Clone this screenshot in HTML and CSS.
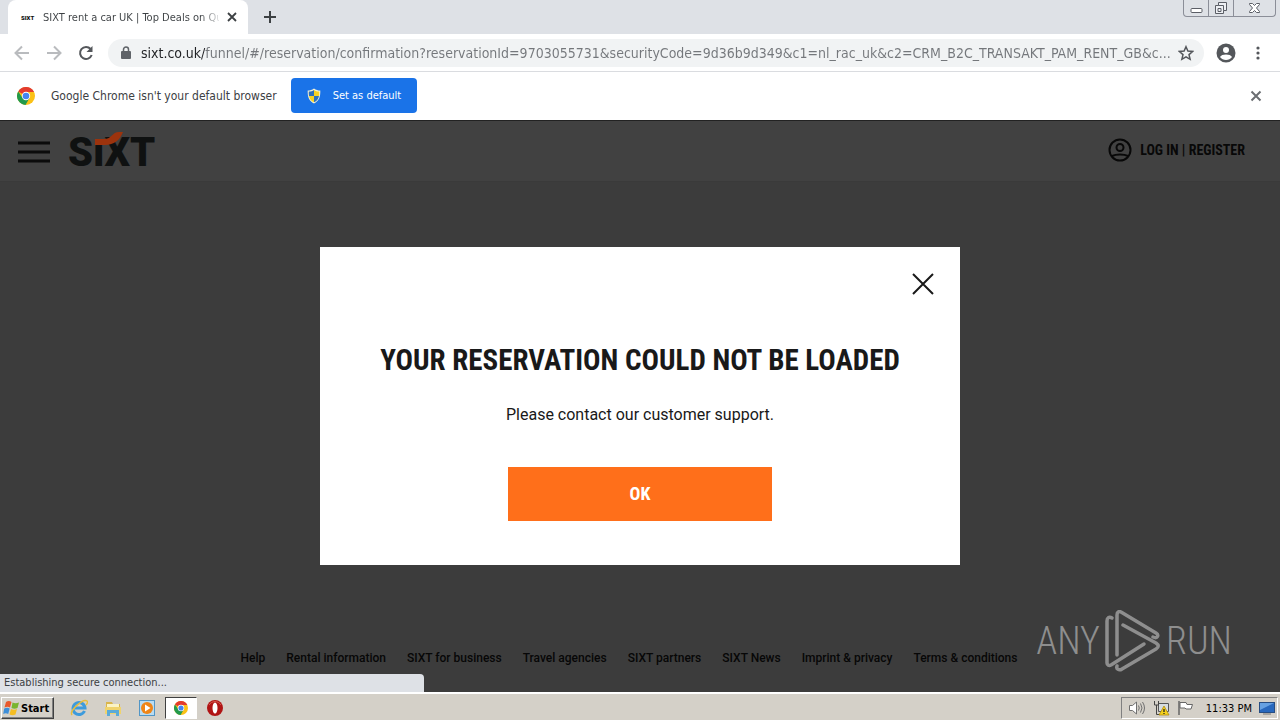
FILE: index.html
```html
<!DOCTYPE html>
<html lang="en">
<head>
    <meta charset="UTF-8">
    <meta name="viewport" content="width=device-width, initial-scale=1.0">
    <title>SIXT rent a car UK | Top Deals on Quality Cars</title>
    <link rel="stylesheet" href="styles.css">
</head>
<body>
    <!-- Tab strip -->
    <div class="tab-strip">
        <div class="tab">
            <span class="favicon">SIXT</span>
            <span class="tab-title">SIXT rent a car UK | Top Deals on Qu</span>
            <button class="icon-button" aria-label="Close tab">
                <svg width="10" height="10" viewBox="0 0 10 10"><path d="M1 1l8 8M9 1l-8 8" stroke="#3c4043" stroke-width="1.8"/></svg>
            </button>
        </div>
        <button class="icon-button new-tab" aria-label="New tab">
            <svg width="12" height="12" viewBox="0 0 12 12"><path d="M6 0v12M0 6h12" stroke="#3c4043" stroke-width="2"/></svg>
        </button>
        <div class="window-controls">
            <button aria-label="Minimize"><svg width="13" height="16" viewBox="0 0 13 16"><rect x="1" y="8.500" width="11" height="4" rx="1" fill="#fff" stroke="#5b5e66"/></svg></button>
            <button aria-label="Restore"><svg width="14" height="16" viewBox="0 0 14 16"><path d="M4.500 2.500h8v8h-3v3h-8v-8h3z" fill="#eef0f4" stroke="#5b5e66"/><path d="M4.500 5.500h5v5M4 8.500h3v3H4z" fill="none" stroke="#5b5e66"/></svg></button>
            <button class="wide" aria-label="Close"><svg width="13" height="16" viewBox="0 0 13 16"><path d="M1.500 3.500h3l2 2 2-2h3v1L8.500 8l3 3.500v1h-3l-2-2-2 2h-3v-1L4.500 8l-3-3.500z" fill="#fff" stroke="#5b5e66"/></svg></button>
        </div>
    </div>

    <!-- Toolbar -->
    <div class="toolbar">
        <button class="icon-button" aria-label="Back">
            <svg width="16" height="16" viewBox="0 0 16 16" fill="none" stroke="#b9bbbe" stroke-width="2"><path d="M15 8H2M8 1.500L1.500 8 8 14.500"/></svg>
        </button>
        <button class="icon-button" aria-label="Forward">
            <svg width="16" height="16" viewBox="0 0 16 16" fill="none" stroke="#b9bbbe" stroke-width="2"><path d="M1 8h13M8 1.500L14.500 8 8 14.500"/></svg>
        </button>
        <button class="icon-button" aria-label="Reload">
            <svg width="16" height="16" viewBox="0 0 16 16"><path d="M12.600 4A6 6 0 1 0 13.700 10" fill="none" stroke="#54575b" stroke-width="2"/><path d="M14.500 1v6H8.500z" fill="#54575b"/></svg>
        </button>
        <div class="address-bar">
            <svg width="12" height="14" viewBox="0 0 12 14"><rect x="1" y="5" width="10" height="8" rx="1" fill="#5f6368"/><path d="M3.500 6V3.500a2.500 2.500 0 0 1 5 0V6" fill="none" stroke="#5f6368" stroke-width="1.500"/></svg>
            <input class="url" type="text" aria-label="Address" value="sixt.co.uk/funnel/#/reservation/confirmation?reservationId=9703055731&amp;securityCode=9d36b9d349&amp;c1=nl_rac_uk&amp;c2=CRM_B2C_TRANSAKT_PAM_RENT_GB&amp;c...">
            <button class="icon-button" aria-label="Bookmark this page">
                <svg width="16" height="16" viewBox="0 0 16 16"><path d="M8 1.700l1.900 4.400 4.700.4-3.600 3.100 1.100 4.700L8 11.800l-4.100 2.500L5 9.600 1.400 6.500l4.700-.4z" fill="none" stroke="#54575b" stroke-width="1.500"/></svg>
            </button>
        </div>
        <button class="icon-button profile" aria-label="Profile">
            <svg width="20" height="20" viewBox="0 0 20 20"><circle cx="10" cy="10" r="9.500" fill="#54575b"/><circle cx="10" cy="7" r="3" fill="#fff"/><path d="M4 14c1.500-3.300 10.500-3.300 12 0-2.700 4-9.300 4-12 0z" fill="#fff"/></svg>
        </button>
        <button class="icon-button" aria-label="Menu">
            <svg width="16" height="16" viewBox="0 0 16 16" fill="#54575b"><circle cx="8" cy="3" r="1.600"/><circle cx="8" cy="8" r="1.600"/><circle cx="8" cy="13" r="1.600"/></svg>
        </button>
    </div>

    <!-- Default browser bar -->
    <div class="info-bar">
        <svg class="chrome-icon" width="18" height="18" viewBox="0 0 18 18"><circle cx="9" cy="9" r="9" fill="#fbc116"/><path d="M9 9L1.200 4.500A9 9 0 0 1 16.800 4.500L17 5H9z" fill="#e33b2e"/><path d="M1.200 4.500A9 9 0 0 0 8.500 18l4-7L9 9 5 10z" fill="#229a4c"/><circle cx="9" cy="9" r="4.200" fill="#fff"/><circle cx="9" cy="9" r="3.300" fill="#4385f0"/></svg>
        <span>Google Chrome isn't your default browser</span>
        <button class="default-button">
            <svg width="14" height="16" viewBox="0 0 14 16"><path d="M7 .5C5 2 3 2.500.7 2.500.5 9 2 13 7 15.500 12 13 13.500 9 13.300 2.500 11 2.500 9 2 7 .5z" fill="#f5f1d5"/><path d="M7 2v6H2C1.700 6.500 1.700 5 1.800 3.600 4 3.500 5.500 3 7 2zM7 8h5c-.6 3-2 5-5 6.300z" fill="#2d71bd"/><path d="M7 2v6h5c.3-1.500.3-3 .2-4.400C10 3.500 8.500 3 7 2zM7 8H2c.6 3 2 5 5 6.300z" fill="#f7d323"/></svg>
            Set as default
        </button>
        <button class="icon-button info-close" aria-label="Dismiss">
            <svg width="12" height="12" viewBox="0 0 12 12"><path d="M1.500 1.500l9 9M10.500 1.500l-9 9" stroke="#6b6e72" stroke-width="2"/></svg>
        </button>
    </div>

    <!-- Web page -->
    <div class="page">
        <header class="site-header">
            <button class="icon-button" aria-label="Open navigation">
                <svg width="32" height="22" viewBox="0 0 32 22"><path d="M0 2h32M0 11h32M0 20h32" stroke="#0b0b0b" stroke-width="3"/></svg>
            </button>
            <a class="logo" href="#" aria-label="SIXT">
                <svg width="90" height="44" viewBox="0 0 90 44"><text class="logo-text" x="0" y="36">SıXT</text><path d="M27 9h9c8 0 8-7 15-7h4c-3 8-9 13-18 13H27z" fill="#9c330d"/></svg>
            </a>
            <a class="login" href="#">
                <svg width="24" height="24" viewBox="0 0 24 24" fill="none" stroke="#080808" stroke-width="2"><circle cx="12" cy="12" r="10.500"/><circle cx="12" cy="9.500" r="3.500"/><path d="M4 18c4-2 12-2 16 0"/></svg>
                LOG IN | REGISTER
            </a>
        </header>

        <main class="content">
            <div class="dialog" role="dialog" aria-labelledby="dialog-title">
                <button class="icon-button dialog-close" aria-label="Close">
                    <svg width="22" height="22" viewBox="0 0 22 22"><path d="M1 1l20 20M21 1L1 21" stroke="#191919" stroke-width="2"/></svg>
                </button>
                <h1 id="dialog-title">YOUR RESERVATION COULD NOT BE LOADED</h1>
                <p>Please contact our customer support.</p>
                <button class="ok-button">OK</button>
            </div>
        </main>

        <footer class="site-footer">
            <a href="#">Help</a>
            <a href="#">Rental information</a>
            <a href="#">SIXT for business</a>
            <a href="#">Travel agencies</a>
            <a href="#">SIXT partners</a>
            <a href="#">SIXT News</a>
            <a href="#">Imprint &amp; privacy</a>
            <a href="#">Terms &amp; conditions</a>
        </footer>

        <div class="status-bubble">Establishing secure connection...</div>

        <div class="watermark">
            <span>ANY</span>
            <svg width="56" height="62" viewBox="0 0 56 62" fill="none" stroke="#8e8e8e" stroke-width="3.500" stroke-linejoin="round" stroke-linecap="round"><path d="M7 8C4 6 2 8 2 11v42c0 2 2 3 4 2l33-21"/><path d="M12 45V5c0-3 2-4 4-3l35 21c3 2 2 6-3 4"/><path d="M18 15l33 18c3 2 3 4 0 6L17 59c-3 2-6 0-5-3"/></svg>
            <span>RUN</span>
        </div>
    </div>

    <!-- Windows taskbar -->
    <div class="taskbar">
        <button class="start-button">
            <svg width="17" height="16" viewBox="0 0 17 16"><path d="M3 2c2-1.500 4-1 5.500 0L7 7.500C5.500 6.500 3.500 6.500 1.500 7.500z" fill="#e8582b"/><path d="M9.500 2.500c2 1 4 1 6.500 0L14.500 8c-2 1-4 1-6 0z" fill="#79b52f"/><path d="M1.200 8.500c2-1 4-1 5.500 0L5.200 14c-1.500-1-3.500-1-5 0z" fill="#3d8ed8"/><path d="M8 9c2 1 4 1 6 0l-1.500 5.500c-2 1-4 1-6 0z" fill="#f5bd22"/></svg>
            Start
        </button>
        <button class="task" aria-label="Internet Explorer">
            <svg width="18" height="18" viewBox="0 0 18 18" fill="none"><path d="M14.500 12A6 6 0 1 1 15 9H5" stroke="#3d9bdc" stroke-width="3"/><path d="M2 16C-1 12 13-1 17 2c1 1 0 3-1 4" stroke="#e6bd3d" stroke-width="1.500"/></svg>
        </button>
        <button class="task" aria-label="Explorer">
            <svg width="18" height="18" viewBox="0 0 18 18"><path d="M2 3h6l1 2h7v10H2z" fill="#d9b54c"/><path d="M3 5h12v5H3z" fill="#fbf3c4"/><path d="M1 8h16v7H1z" fill="#f0d36c"/><path d="M3 17v-6h12v6h-3v-3H6v3z" fill="#5aaad8"/></svg>
        </button>
        <button class="task" aria-label="Media Player">
            <svg width="18" height="18" viewBox="0 0 18 18"><rect x="1.500" y="1.500" width="15" height="15" fill="#b9dcf2" stroke="#5296c6"/><circle cx="9" cy="9" r="6" fill="#ef8517"/><path d="M7 5.500v7L12.500 9z" fill="#fff"/></svg>
        </button>
        <button class="task active" aria-label="Google Chrome">
            <svg width="14" height="14" viewBox="0 0 18 18"><circle cx="9" cy="9" r="9" fill="#fbc116"/><path d="M9 9L1.200 4.500A9 9 0 0 1 16.800 4.500L17 5H9z" fill="#e33b2e"/><path d="M1.200 4.500A9 9 0 0 0 8.500 18l4-7L9 9 5 10z" fill="#229a4c"/><circle cx="9" cy="9" r="4.200" fill="#fff"/><circle cx="9" cy="9" r="3.300" fill="#4385f0"/></svg>
        </button>
        <button class="task" aria-label="Opera">
            <svg width="18" height="18" viewBox="0 0 18 18"><circle cx="9" cy="9" r="8" fill="#b01414"/><ellipse cx="9" cy="9" rx="2.500" ry="5.500" fill="#fff"/><path d="M3 6a7 7 0 0 1 12 0" fill="none" stroke="#db5a50"/></svg>
        </button>
        <div class="tray">
            <svg width="18" height="16" viewBox="0 0 18 16" fill="none" stroke="#707070"><path d="M1.500 5.500h3L8.500 2v12l-4-3.500h-3z" fill="#fff"/><path d="M10.500 5.500q1.500 2.500 0 5M12.500 3.500q3 4.500 0 9M14.500 2q4 6 0 12"/></svg>
            <svg width="17" height="16" viewBox="0 0 17 16"><path d="M5.500 3.500h10v8h-10z" fill="#d6dce0" stroke="#555"/><path d="M1.500 1v4h4V1M3.500 5v9.500h4" fill="none" stroke="#444"/><path d="M11 6l5 9H6z" fill="#f6d21c" stroke="#b18c10" stroke-width=".8"/><path d="M11 9v3M11 13v1" stroke="#222" stroke-width="1.300"/></svg>
            <svg width="17" height="16" viewBox="0 0 17 16"><path d="M2 1v14" stroke="#666" stroke-width="1.500"/><path d="M3 2.500h6l1 2h5.500L14 9H9L8 8H3z" fill="#fff" stroke="#666"/></svg>
            <time>11:33 PM</time>
            <svg width="16" height="14" viewBox="0 0 16 14"><rect x=".5" y="1.500" width="15" height="10" fill="#2868bd" stroke="#264d83"/><path d="M1 2h14L1 9z" fill="#66a1e2"/><path d="M4 13h8" stroke="#777"/></svg>
        </div>
    </div>
</body>
</html>
```
FILE: styles.css
```css
:root {
    --chrome-bg: #dee1e6;
    --ui-font: "DejaVu Sans Condensed", "Noto Sans", sans-serif;
    --site-font: Roboto, sans-serif;
    --condensed-font: "Roboto Condensed", Roboto, sans-serif;
}

* {
    box-sizing: border-box;
}

body {
    margin: 0;
    min-height: 100vh;
    display: flex;
    flex-direction: column;
    font-family: var(--ui-font);
    font-size: 12px;
    color: #3c4043;
}

button {
    font: inherit;
    cursor: pointer;
}

svg {
    display: block;
    flex: none;
}

a {
    color: inherit;
    text-decoration: none;
}

.icon-button {
    display: flex;
    padding: 0;
    border: none;
    background: none;
}

/* Tab strip */
.tab-strip {
    display: flex;
    height: 34px;
    padding-left: 8px;
    background: var(--chrome-bg);
}

.tab {
    display: flex;
    align-items: center;
    width: 240px;
    padding: 0 11px 0 13px;
    background: #fff;
    border-radius: 8px 8px 0 0;
    font-size: 11px;
}

.favicon {
    width: 22px;
    font: 900 6px var(--site-font);
    color: #111;
}

/* long titles fade out before the close button */
.tab-title {
    flex: 1;
    min-width: 0;
    margin-right: 8px;
    white-space: nowrap;
    color: transparent;
    background: linear-gradient(to right, #3c4043 158px, #e4e5e6 176px);
    -webkit-background-clip: text;
    background-clip: text;
}

.new-tab {
    align-self: center;
    margin-left: 16px;
}

.window-controls {
    display: flex;
    align-self: flex-start;
    height: 17px;
    margin: 0 4px 0 auto;
    border: 1px solid #8b8e98;
    border-top: none;
    border-radius: 0 0 4px 4px;
}

.window-controls button {
    display: flex;
    justify-content: center;
    width: 25px;
    padding: 0;
    border: none;
    border-right: 1px solid #8b8e98;
    background: none;
}

.window-controls .wide {
    width: 41px;
    border-right: none;
}

/* Toolbar */
.toolbar {
    display: flex;
    align-items: center;
    gap: 16px;
    height: 38px;
    padding: 0 14px;
    background: #fff;
    border-bottom: 1px solid #dadce0;
}

.address-bar {
    flex: 1;
    display: flex;
    align-items: center;
    height: 28px;
    margin-left: -2px;
    padding: 0 10px 0 12px;
    background: #f1f3f4;
    border-radius: 14px;
}

/* the host is drawn darker than the rest of the address */
.url {
    flex: 1;
    min-width: 0;
    margin-left: 9px;
    padding: 0;
    border: none;
    outline: none;
    font-family: var(--ui-font);
    font-size: 14px;
    color: transparent;
    background: linear-gradient(to right, #202124 64px, #74777b 64px);
    -webkit-background-clip: text;
    background-clip: text;
}

.profile {
    margin: 0 -2px 0 -4px;
}

/* Default browser bar */
.info-bar {
    display: flex;
    align-items: center;
    height: 48px;
    padding: 0 18px 1px 17px;
    background: #fff;
}

.chrome-icon {
    margin-right: 16px;
}

.default-button {
    display: flex;
    align-items: center;
    gap: 12px;
    height: 35px;
    margin-left: 14px;
    padding: 0 16px;
    border: none;
    border-radius: 4px;
    background: #1a73e8;
    color: #fff;
    font-size: 11px;
}

.info-close {
    margin-left: auto;
}

/* Web page */
.page {
    position: relative;
    flex: 1;
    display: flex;
    flex-direction: column;
    background: #3c3c3c;
    font-family: var(--site-font);
}

.site-header {
    display: flex;
    align-items: center;
    gap: 18px;
    height: 62px;
    padding: 1px 35px 0 18px;
    background: #414141;
    border-top: 1px solid #222;
    border-bottom: 1px solid #3a3a3a;
}

.logo-text {
    font: 900 40px var(--site-font);
    fill: #0f1111;
}

.login {
    display: flex;
    align-items: center;
    gap: 8px;
    margin-left: auto;
    padding-bottom: 3px;
    font: bold 14px var(--condensed-font);
    color: #080808;
}

.content {
    flex: 1;
    display: flex;
    align-items: center;
    justify-content: center;
    padding-bottom: 22px;
}

.dialog {
    display: flex;
    flex-direction: column;
    align-items: center;
    width: 50%;
    min-width: 560px;
    padding: 26px 26px 44px;
    background: #fff;
    color: #191919;
}

.dialog-close {
    align-self: flex-end;
}

.dialog h1 {
    margin: 48px 0 0;
    font: bold 29px/34px var(--condensed-font);
}

.dialog p {
    margin: 26px 0 40px;
    font-size: 16px;
    line-height: 24px;
}

.ok-button {
    width: 264px;
    height: 54px;
    border: none;
    background: #ff6f1a;
    color: #fff;
    font: bold 18px var(--condensed-font);
}

.site-footer {
    display: flex;
    justify-content: center;
    gap: 21px;
    height: 41px;
    padding-right: 22px;
    font-size: 12px;
    font-weight: 500;
    color: #070707;
}

.status-bubble {
    position: absolute;
    left: 0;
    bottom: 0;
    width: 424px;
    height: 18px;
    padding-left: 4px;
    background: var(--chrome-bg);
    border-radius: 0 4px 0 0;
    font: 11px/18px var(--ui-font);
    color: #3c4043;
}

.watermark {
    position: absolute;
    right: 48px;
    bottom: 20px;
    display: flex;
    align-items: center;
    gap: 5px;
    font: 300 38px var(--condensed-font);
    color: #8e8e8e;
}

/* Taskbar */
.taskbar {
    display: flex;
    align-items: center;
    height: 28px;
    padding: 2px 2px 0 1px;
    background: #d4d0c8;
    border-top: 2px solid #fff;
    color: #000;
}

.start-button {
    display: flex;
    align-items: center;
    gap: 1px;
    width: 53px;
    height: 22px;
    margin-right: 9px;
    padding: 0 1px;
    border: 1px solid;
    border-color: #fff #404040 #404040 #fff;
    background: #d4d0c8;
    box-shadow: inset -1px -1px #808080;
    font: bold 11px var(--ui-font);
}

.task {
    display: flex;
    align-items: center;
    justify-content: center;
    width: 32px;
    height: 22px;
    margin-right: 2px;
    padding: 0;
    border: none;
    background: none;
}

.task.active {
    border: 1px solid;
    border-color: #404040 #fff #fff #404040;
    background: #fff;
}

.tray {
    display: flex;
    align-items: center;
    gap: 7px;
    height: 22px;
    margin-left: auto;
    padding: 0 2px 0 6px;
    border: 1px solid;
    border-color: #808080 #fff #fff #808080;
    font: 11px var(--ui-font);
}

.tray time {
    margin-left: 5px;
}
```
